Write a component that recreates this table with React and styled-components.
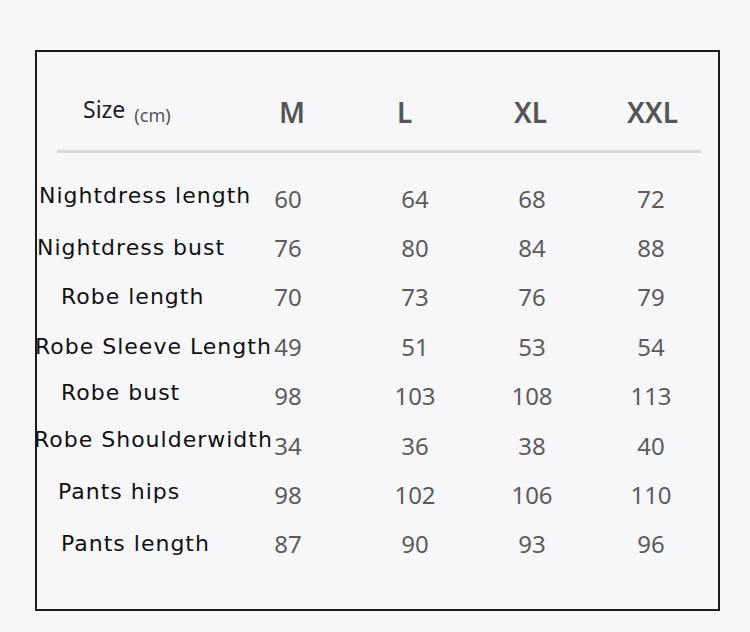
import styled, { createGlobalStyle } from "styled-components";

const Global = createGlobalStyle`
    html, body {
        margin: 0;
        padding: 0;
        background-color: #f7f7f9;
    }
`;

const Page = styled.div`
    width: 750px;
    height: 632px;
    padding: 50px 0 0 35px;
    box-sizing: border-box;
`;

const Box = styled.div`
    width: 685px;
    height: 561px;
    box-sizing: border-box;
    border: 2px solid #1c1c1c;
    padding-top: 46px;
`;

const Header = styled.div`
    display: grid;
    grid-template-columns: 196px 118px 117px 113px auto;
    align-items: start;
    padding-left: 46px;
    height: 28px;
`;

const SizeLabel = styled.div`
    font-family: "Noto Sans", sans-serif;
    font-size: 23px;
    line-height: 23px;
    color: #222;
    white-space: nowrap;
`;

const Unit = styled.span`
    font-size: 18px;
    color: #555;
    margin-left: 9px;
    vertical-align: -4px;
`;

const SizeName = styled.div`
    font-family: "Noto Sans", sans-serif;
    font-size: 28px;
    font-weight: 600;
    line-height: 28px;
    color: #555;
`;

const Divider = styled.div`
    height: 3px;
    background-color: #d8d8d8;
    margin: 24px 17px 21px 20px;
`;

const Row = styled.div`
    display: grid;
    grid-template-columns: 215px 127px 117px 119px 72px;
    align-items: center;
    height: 49.4px;
`;

const Label = styled.div`
    font-family: "DejaVu Sans", sans-serif;
    font-size: 22px;
    line-height: 22px;
    letter-spacing: 1px;
    color: #111;
    white-space: nowrap;
    margin-left: ${(p) => p.$indent}px;
    margin-top: ${(p) => p.$shift * 2}px;
`;

const Value = styled.div`
    width: 72px;
    text-align: center;
    font-family: "Noto Sans", sans-serif;
    font-size: 24px;
    line-height: 24px;
    color: #5c5c5c;
`;

const sizes = ["M", "L", "XL", "XXL"];

const rows = [
    { name: "Nightdress length", indent: 2, shift: -2.5, values: [60, 64, 68, 72] },
    { name: "Nightdress bust", indent: 0, shift: 0, values: [76, 80, 84, 88] },
    { name: "Robe length", indent: 24, shift: 0, values: [70, 73, 76, 79] },
    { name: "Robe Sleeve Length", indent: -2, shift: 0, values: [49, 51, 53, 54] },
    { name: "Robe bust", indent: 24, shift: -3, values: [98, 103, 108, 113] },
    { name: "Robe Shoulderwidth", indent: -3, shift: -6, values: [34, 36, 38, 40] },
    { name: "Pants hips", indent: 21, shift: -3, values: [98, 102, 106, 110] },
    { name: "Pants length", indent: 24, shift: 0, values: [87, 90, 93, 96] },
];

function App() {
    return (
        <Page>
            <Global />
            <Box>
                <Header>
                    <SizeLabel>
                        Size<Unit>(cm)</Unit>
                    </SizeLabel>
                    {sizes.map((s) => (
                        <SizeName key={s}>{s}</SizeName>
                    ))}
                </Header>
                <Divider />
                {rows.map((row) => (
                    <Row key={row.name}>
                        <Label $indent={row.indent} $shift={row.shift}>
                            {row.name}
                        </Label>
                        {row.values.map((v, i) => (
                            <Value key={i}>{v}</Value>
                        ))}
                    </Row>
                ))}
            </Box>
        </Page>
    );
}

export default App;
